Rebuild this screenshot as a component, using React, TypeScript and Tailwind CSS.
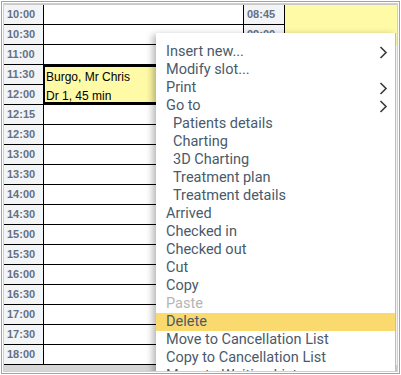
import React from "react";

const times = ["10:00","10:30","11:00","11:30","12:00","12:15","12:30","13:00","13:30","14:00","14:30","15:00","15:30","16:00","16:30","17:00","17:30","18:00"];

type Item = { label: string; sub?: boolean; arrow?: boolean; disabled?: boolean; active?: boolean };
const items: Item[] = [
  { label: "Insert new...", arrow: true },
  { label: "Modify slot..." },
  { label: "Print", arrow: true },
  { label: "Go to", arrow: true },
  { label: "Patients details", sub: true },
  { label: "Charting", sub: true },
  { label: "3D Charting", sub: true },
  { label: "Treatment plan", sub: true },
  { label: "Treatment details", sub: true },
  { label: "Arrived" },
  { label: "Checked in" },
  { label: "Checked out" },
  { label: "Cut" },
  { label: "Copy" },
  { label: "Paste", disabled: true },
  { label: "Delete", active: true },
  { label: "Move to Cancellation List" },
  { label: "Copy to Cancellation List" },
  { label: "Move to Waiting List" },
];

function Chevron() {
  return (
    <svg width="9" height="13" viewBox="0 0 9 13" className="absolute right-[7px] top-[3px]">
      <polyline points="1.5,1 7,6.5 1.5,12" fill="none" stroke="#3a3a3a" strokeWidth="1.6" />
    </svg>
  );
}

export default function App() {
  const timeCls = "h-[20px] border-b border-black pl-[3px] text-[11px] font-bold leading-[19px] text-[#637086]";
  return (
    <div className="w-[401px] h-[375px] bg-white p-px" style={{ fontFamily: '"Liberation Sans", Arial, sans-serif' }}>
      <div className="h-full border border-[#a3a3a3] p-px">
        <div className="relative h-full overflow-hidden border border-[#d0d0d0] bg-white">
          <div className="flex flex-col h-full">
            <div className="flex border-t border-[#c8c8c8]">
              {/* time column */}
              <div className="w-[40px] shrink-0 border-r border-black bg-[#f3f4f6]">
                {times.map((t) => (
                  <div key={t} className={timeCls}>{t}</div>
                ))}
              </div>
              {/* main column */}
              <div className="w-[200px] shrink-0 border-r border-black flex flex-col">
                <div className="h-[20px] border-b border-black" />
                <div className="h-[20px] border-b border-black" />
                <div className="h-[19px]" />
                <div className="h-[41px] border-t-[3px] border-b-[3px] border-l border-black bg-[#fffaa6] pl-px text-[12px] leading-[20px] text-black">
                  <div>Burgo, Mr Chris</div>
                  <div className="-mt-px">Dr 1, 45 min</div>
                </div>
                {times.slice(5).map((t) => (
                  <div key={t} className="h-[20px] border-b border-black" />
                ))}
              </div>
              {/* second time column */}
              <div className="w-[41px] shrink-0 border-r border-black bg-[#f3f4f6]">
                {["08:45","09:00","09:15","09:30","09:45","10:00","10:15","10:30","10:45","11:00","11:15","11:30","11:45","12:00","12:15","12:30","12:45","13:00"].map((t) => (
                  <div key={t} className={timeCls}>{t}</div>
                ))}
              </div>
              {/* right column */}
              <div className="flex-1 flex flex-col">
                <div className="h-[40px] bg-[#fffaa6]" />
              </div>
            </div>
            <div className="flex-1 bg-[#d6d6d6]" />
          </div>

          {/* context menu */}
          <div className="absolute left-[152px] top-[29px] w-[240px] h-[400px] bg-white border-r border-[#bdbdbd] pt-[10px] shadow-[-3px_2px_7px_rgba(0,0,0,0.3)]" style={{ fontFamily: 'Roboto, "Noto Sans", sans-serif' }}>
            {items.map((it) => (
              <div
                key={it.label}
                className={
                  "relative h-[18px] text-[14.5px] leading-[18px] whitespace-nowrap " +
                  (it.sub ? "pl-[17px] " : "pl-[10px] ") +
                  (it.disabled ? "text-[#b5b5b5] " : "text-[#4a5a6a] ") +
                  (it.active ? "bg-[#fad96f] " : "")
                }
              >
                {it.label}
                {it.arrow ? <Chevron /> : null}
              </div>
            ))}
          </div>
        </div>
      </div>
    </div>
  );
}
